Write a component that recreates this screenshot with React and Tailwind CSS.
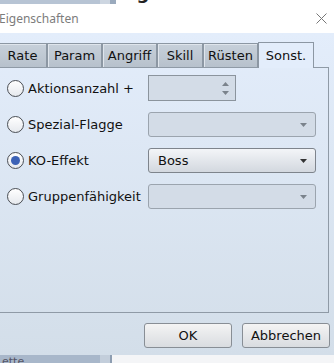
import { useState } from "react";

const font = { fontFamily: '"DejaVu Sans", "Noto Sans", sans-serif' };

function Radio({ checked, onClick }) {
    return (
        <button
            onClick={onClick}
            className="w-[17px] h-[17px] rounded-full border border-[#4a4e54] bg-gradient-to-b from-[#ffffff] to-[#e6e9ee] flex items-center justify-center shrink-0"
        >
            {checked && <span className="w-[9px] h-[9px] rounded-full bg-[#3c62b6]" />}
        </button>
    );
}

function Arrow({ up, className }) {
    return (
        <svg width="7" height="4" viewBox="0 0 7 4" className={className}>
            <path d={up ? "M0 4 L3.5 0 L7 4 Z" : "M0 0 L7 0 L3.5 4 Z"} fill="currentColor" />
        </svg>
    );
}

function Combo({ value, enabled }) {
    return (
        <div
            className={
                "w-[168px] h-[25px] rounded-[3px] border flex items-center pl-[9px] pr-[8px] " +
                (enabled
                    ? "border-[#7e848c] bg-gradient-to-b from-[#f3f5f8] to-[#d3d8df] text-[#111]"
                    : "border-[#9ba4ae] bg-[#d3dce7]")
            }
        >
            <span className="flex-1 text-[13px]">{value}</span>
            <Arrow className={enabled ? "text-[#333]" : "text-[#7b838c]"} />
        </div>
    );
}

export default function App() {

    const [choice, setChoice] = useState(2);

    const tabs = [
        { label: "Rate", w: "w-[49px]" },
        { label: "Param", w: "w-[55px]" },
        { label: "Angriff", w: "w-[55px]" },
        { label: "Skill", w: "w-[46px]" },
        { label: "Rüsten", w: "w-[55px]" },
    ];

    const rows = [
        { label: "Aktionsanzahl +", kind: "spin" },
        { label: "Spezial-Flagge", kind: "combo" },
        { label: "KO-Effekt", kind: "combo", value: "Boss" },
        { label: "Gruppenfähigkeit", kind: "combo" },
    ];

    return (

        <div className="w-[334px] h-[363px] overflow-hidden flex flex-col bg-white" style={font}>

            {/* window behind, top edge */}
            <div className="h-[4px] flex overflow-hidden shrink-0">
                <div className="w-[100px] bg-[#b7c4d4]" />
                <div className="w-[10px] bg-[#cdd6e1]" />
                <div className="w-[6px] bg-[#9aaabd]" />
                <div className="flex-1 bg-white pl-[2px]">
                    <div className="text-[18px] font-bold leading-none -mt-[16px] text-[#222]">Eigenschaften</div>
                </div>
            </div>

            {/* title bar */}
            <div className="h-[29px] flex items-center justify-between bg-white shrink-0">
                <span className="text-[12px] text-[#7c7c7c] -ml-[1px]" style={{ fontFamily: '"Noto Sans", sans-serif' }}>
                    Eigenschaften
                </span>
                <svg width="11" height="11" viewBox="0 0 11 11" className="mr-[7px]">
                    <path d="M0.5 0.5 L10.5 10.5 M10.5 0.5 L0.5 10.5" stroke="#777" strokeWidth="1" />
                </svg>
            </div>

            {/* dialog body */}
            <div className="h-[322px] flex flex-col bg-gradient-to-b from-[#e3edfb] to-[#d3dee9] shrink-0">

                <div className="flex items-end pt-[9px] -ml-[2px]">
                    {tabs.map((t) => (
                        <div
                            key={t.label}
                            className={t.w + " h-[24px] border border-[#8c97a3] border-b-0 bg-gradient-to-b from-[#c7d0da] to-[#b7c1cc] shadow-[inset_1px_1px_0_#dfe5ec] flex items-center justify-center text-[13px] text-[#111]"}
                        >
                            {t.label}
                        </div>
                    ))}
                    <div className="w-[56px] h-[26px] border border-[#8c97a3] border-b-0 bg-[#e3edfb] -mb-px relative z-10 flex items-center justify-center text-[13px] text-[#111]">
                        Sonst.
                    </div>
                </div>

                <div className="h-[246px] w-[331px] -ml-[2px] border border-[#8f9aa6] flex flex-col gap-[11px] pt-[8px] pl-[8px]">
                    {rows.map((r, i) => (
                        <div key={r.label} className="h-[25px] flex items-center">
                            <Radio checked={choice === i} onClick={() => setChoice(i)} />
                            <span className="w-[124px] pl-[4px] text-[13px] text-[#111] whitespace-nowrap">{r.label}</span>
                            {r.kind === "spin" ? (
                                <div className="w-[88px] h-[26px] -mt-[1px] border border-[#8b949d] bg-[#d3dce7] flex flex-col items-end justify-center gap-[5px] pr-[6px]">
                                    <Arrow up className="text-[#7b838c]" />
                                    <Arrow className="text-[#7b838c]" />
                                </div>
                            ) : (
                                <Combo value={r.value} enabled={choice === i} />
                            )}
                        </div>
                    ))}
                </div>

                <div className="flex justify-end gap-[10px] pt-[10px] pr-[4px]">
                    <button className="w-[88px] h-[25px] rounded-[3px] border border-[#888e95] bg-gradient-to-b from-[#f4f4f4] to-[#d9dce0] text-[13px] text-[#111]">
                        OK
                    </button>
                    <button className="w-[88px] h-[25px] rounded-[3px] border border-[#888e95] bg-gradient-to-b from-[#f4f4f4] to-[#d9dce0] text-[13px] text-[#111]">
                        Abbrechen
                    </button>
                </div>

            </div>

            {/* window behind, bottom edge */}
            <div className="flex-1 flex overflow-hidden">
                <div className="w-[100px] bg-[#a8b7ca] pl-[2px] overflow-hidden">
                    <div className="text-[11px] leading-none mt-[1px] text-[#556]">ette</div>
                </div>
                <div className="w-[10px] bg-[#c3cedb]" />
                <div className="w-[2px] bg-[#8d9db1]" />
                <div className="flex-1 bg-[#f4f5f7]" />
            </div>

        </div>
    );
}
